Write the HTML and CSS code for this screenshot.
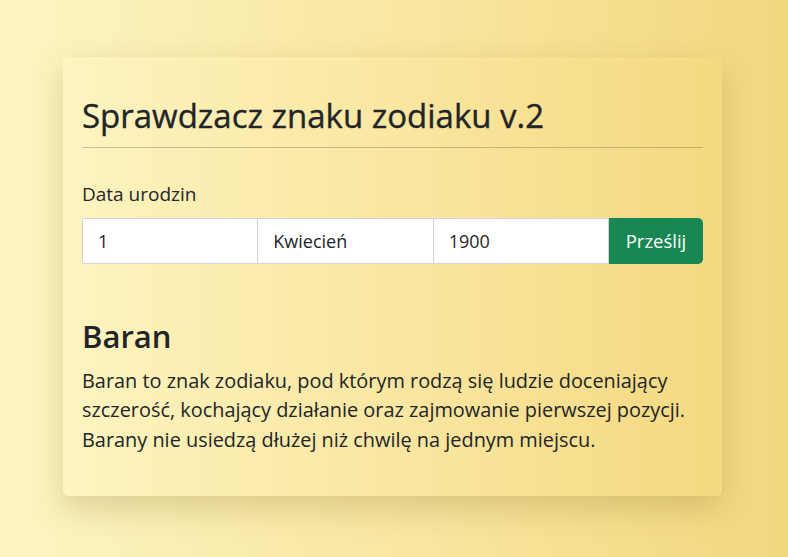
FILE: index.html
```html
<!DOCTYPE html>
<html lang="pl">
<head>
<meta charset="utf-8">
<title>Sprawdzacz znaku zodiaku v.2</title>
<link rel="stylesheet" href="styles.css">
</head>
<body>
<main class="card">
  <h1 class="title">Sprawdzacz znaku zodiaku v.2</h1>
  <hr class="divider">
  <form class="form">
    <label class="label" for="day">Data urodzin</label>
    <div class="input-group">
      <input class="field" id="day" type="text" value="1">
      <input class="field" type="text" value="Kwiecień">
      <input class="field" type="text" value="1900">
      <button class="btn" type="button">Prześlij</button>
    </div>
  </form>
  <section class="result">
    <h2 class="sign">Baran</h2>
    <p class="desc">Baran to znak zodiaku, pod którym rodzą się ludzie doceniający szczerość, kochający działanie oraz zajmowanie pierwszej pozycji. Barany nie usiedzą dłużej niż chwilę na jednym miejscu.</p>
  </section>
</main>
</body>
</html>
```
FILE: styles.css
```css
html, body {
  margin: 0;
  padding: 0;
}
body {
  min-height: 100vh;
  background: linear-gradient(90deg, #fcf5c2 0%, #f9e7a2 50%, #f3d77f 100%);
  font-family: "Open Sans", "Noto Sans", sans-serif;
  color: #212529;
  padding-top: 57px;
  box-sizing: border-box;
  overflow: hidden;
}
.card {
  width: 659px;
  margin: 0 0 0 63px;
  box-sizing: border-box;
  padding: 39px 19px 42px 19px;
  border-radius: 6px;
  background: linear-gradient(90deg, #fef4c0 0%, #f9e59e 55%, #f5d980 100%);
  box-shadow: 0 12px 32px rgba(120, 95, 20, 0.24);
}
.title {
  margin: 0;
  font-size: 33px;
  font-weight: 500;
  line-height: 39.6px;
  -webkit-text-stroke: 0.35px #212529;
}
.divider {
  margin: 11px 0 0;
  border: 0;
  border-top: 1px solid rgba(33, 37, 41, 0.25);
}
.form {
  margin-top: 34px;
}
.label {
  display: block;
  font-size: 19px;
  line-height: 24px;
  margin-bottom: 12px;
}
.input-group {
  display: flex;
  height: 46px;
}
.field {
  flex: 1 1 0;
  min-width: 0;
  margin: 0 0 0 -1px;
  padding: 0 15px;
  border: 1px solid #ced4da;
  background: #fff;
  font: inherit;
  font-size: 18px;
  color: #212529;
  border-radius: 0;
  outline: none;
}
.field:first-child {
  margin-left: 0;
  border-radius: 2px 0 0 2px;
}
.btn {
  flex: 0 0 94px;
  margin: 0;
  border: 0;
  padding: 0;
  border-radius: 0 5px 5px 0;
  background: #198754;
  color: #fff;
  font: inherit;
  font-size: 18.5px;
}
.result {
  margin-top: 54px;
}
.sign {
  margin: 0;
  font-size: 31px;
  font-weight: 600;
  line-height: 37.2px;
}
.desc {
  margin: 11px 0 0;
  font-size: 19.9px;
  line-height: 29.5px;
}
```
